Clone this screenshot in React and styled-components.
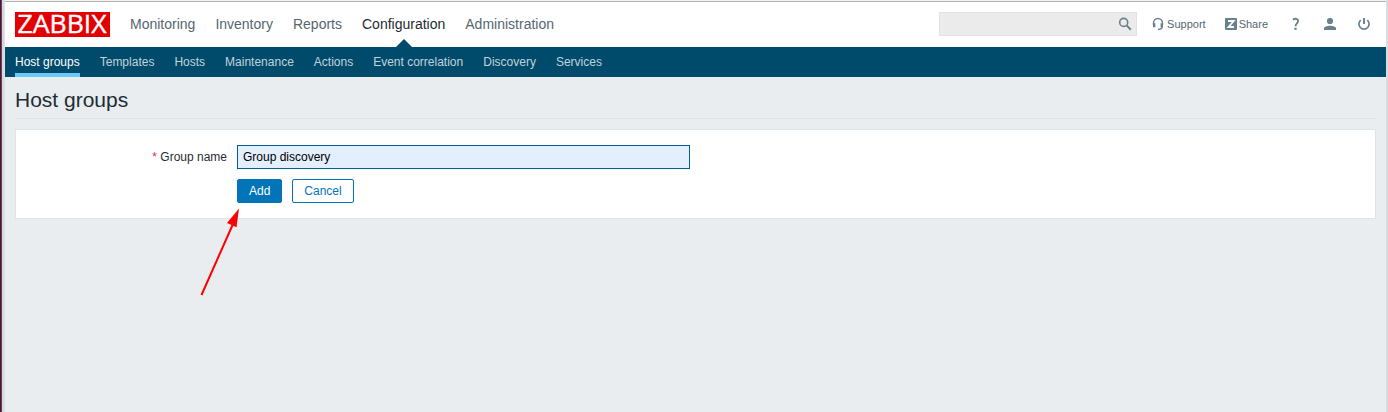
import React from 'react';
import styled, { createGlobalStyle } from 'styled-components';

const GlobalStyle = createGlobalStyle`
  *, *::before, *::after { box-sizing: border-box; }
  body {
    margin: 0;
    background: #e9edf0;
    color: #1f2c33;
    font-family: "Liberation Sans", Arial, sans-serif;
    font-size: 12px;
    line-height: 14px;
    overflow: hidden;
  }
`;

const Window = styled.div`
  display: grid;
  grid-template-columns: 5px minmax(0, 1fr) 2px;
  height: 412px;
`;

const LeftFrame = styled.div`
  background: linear-gradient(90deg, #5e0b3a 0 1px, #5b4a56 1px 2px, #d5d8dc 2px 4px, #dfe2e8 4px 5px);
`;

const RightFrame = styled.div`
  background: #d9dce1;
`;

const Page = styled.div`
  display: flex;
  flex-direction: column;
  background: #e9edf0;
`;

const TopBar = styled.header`
  display: flex;
  align-items: center;
  height: 47px;
  padding: 2px 10px 0;
  background: linear-gradient(#f4f4f4 0 1px, #b2b2b2 1px 2px, #fff 2px);
`;

const Logo = styled.svg`
  display: block;
  width: 95px;
  height: 25px;
  margin-right: 20px;
  background: #e30000;
  flex: none;
  overflow: visible;
`;

const LogoText = styled.text`
  fill: #fff;
  stroke: #fff;
  stroke-width: 0.4px;
  font: 25px "Open Sans", sans-serif;
`;

const MainMenu = styled.nav`
  display: flex;
  gap: 20px;
  height: 45px;
  font-size: 14px;
  line-height: 44px;
`;

const MainItem = styled.a`
  position: relative;
  color: ${(p) => (p.$active ? '#1f2c33' : '#56676f')};
  &::after {
    content: '';
    display: ${(p) => (p.$active ? 'block' : 'none')};
    position: absolute;
    bottom: 0;
    left: 50%;
    margin-left: -8px;
    border: 8px solid transparent;
    border-top: 0;
    border-bottom-color: #004b6b;
  }
`;

const Tools = styled.div`
  display: flex;
  align-items: center;
  height: 24px;
  margin-left: auto;
  margin-bottom: 1px;
  color: #56676f;
  font-size: 11px;
`;

const SearchBox = styled.div`
  display: flex;
  align-items: center;
  justify-content: flex-end;
  width: 198px;
  height: 24px;
  padding-right: 4px;
  margin-right: 15px;
  background: #ebebeb;
  border: 1px solid #e2e2e2;
`;

const ToolLink = styled.a`
  display: flex;
  align-items: center;
  gap: ${(p) => p.$gap}px;
  margin-right: ${(p) => p.$after}px;
`;

const Icon = styled.svg`
  display: block;
  flex: none;
  color: #69808d;
`;

const SubMenu = styled.nav`
  display: flex;
  gap: 20px;
  height: 30px;
  padding: 0 10px;
  background: #004b6b;
  line-height: 30px;
`;

const SubItem = styled.a`
  height: 30px;
  color: ${(p) => (p.$active ? '#fff' : '#c0d2da')};
  border-bottom: 4px solid ${(p) => (p.$active ? '#69c9f9' : 'transparent')};
`;

const Title = styled.h1`
  height: 42px;
  margin: 0 10px 10px;
  border-bottom: 1px solid #dfe4e7;
  font-size: 21px;
  font-weight: normal;
  line-height: 46px;
`;

const Form = styled.form`
  display: grid;
  grid-template-columns: 211px 453px;
  column-gap: 10px;
  row-gap: 10px;
  align-content: start;
  height: 90px;
  margin: 0 10px;
  padding-top: 15px;
  background: #fff;
  border: 1px solid #dfe4e7;
`;

const Label = styled.label`
  text-align: right;
  line-height: 24px;
  &::before {
    content: '* ';
    color: #f0283c;
  }
`;

const Input = styled.input`
  height: 24px;
  padding: 0 5px;
  color: #000;
  background: #e4effd;
  border: 1px solid #005f97;
  font: inherit;
  outline: 0;
`;

const Actions = styled.div`
  display: flex;
  grid-column: 2;
  gap: 10px;
`;

const Button = styled.button`
  height: 24px;
  padding: 0 11px;
  color: ${(p) => (p.$primary ? '#fff' : '#0275b8')};
  background: ${(p) => (p.$primary ? '#0275b8' : '#fff')};
  border: 1px solid #0275b8;
  border-radius: 2px;
  font: inherit;
`;

const Arrow = styled.svg`
  position: absolute;
  left: 195px;
  top: 204px;
`;

const sections = ['Monitoring', 'Inventory', 'Reports', 'Configuration', 'Administration'];
const pages = ['Host groups', 'Templates', 'Hosts', 'Maintenance', 'Actions', 'Event correlation', 'Discovery', 'Services'];

export default function App() {
  return (
    <>
      <GlobalStyle />
      <Window>
        <LeftFrame />
        <Page>
          <TopBar>
            <Logo viewBox="0 0 95 25">
              <LogoText x="2.6" y="21.3" textLength="89" lengthAdjust="spacingAndGlyphs">ZABBIX</LogoText>
            </Logo>
            <MainMenu>
              {sections.map((name) => (
                <MainItem key={name} $active={name === 'Configuration'}>{name}</MainItem>
              ))}
            </MainMenu>
            <Tools>
              <SearchBox>
                <Icon width="14" height="14" viewBox="0 0 14 14" fill="none" stroke="currentColor">
                  <circle cx="5.7" cy="5.4" r="4" strokeWidth="1.6" />
                  <path d="M8.6 8.4 12.8 12.7" strokeWidth="2" />
                </Icon>
              </SearchBox>
              <ToolLink $gap={3} $after={19}>
                <Icon width="12" height="14" viewBox="0 0 12 14" fill="none" stroke="currentColor">
                  <path d="M1.5 8V6a4.5 4.5 0 0 1 9 0v2" strokeWidth="1.4" />
                  <path d="M2.2 6.2v4M9.8 6.2v4" strokeWidth="2.4" />
                  <path d="M10.3 9.5c0 1.8-1 2.8-4.3 2.8" strokeWidth="1.5" />
                </Icon>
                Support
              </ToolLink>
              <ToolLink $gap={2} $after={24}>
                <Icon width="12" height="12" viewBox="0 0 12 12">
                  <rect width="12" height="12" rx="1" fill="currentColor" />
                  <path d="M3 3h5.7L3.5 9H9" fill="none" stroke="#fff" strokeWidth="1.8" />
                </Icon>
                Share
              </ToolLink>
              <ToolLink $after={24}>
                <Icon width="8" height="14" viewBox="0 0 8 14">
                  <path d="M0.900 2.600C3.400 1.100 6.300 1.800 6.100 4.200 6 6.300 3.500 6.500 3.500 9.200" fill="none" stroke="currentColor" strokeWidth="1.9" />
                  <rect x="2.400" y="10.700" width="2.200" height="2.200" fill="currentColor" />
                </Icon>
              </ToolLink>
              <ToolLink $after={22}>
                <Icon width="12" height="12" viewBox="0 0 12 12" fill="currentColor">
                  <circle cx="6" cy="3" r="3.1" />
                  <path d="M0 12v-1.500C0 8.700 3 7.800 6 7.800s6 .9 6 2.700V12z" />
                </Icon>
              </ToolLink>
              <ToolLink $after={6}>
                <Icon width="12" height="12" viewBox="0 0 12 12" fill="none" stroke="currentColor">
                  <path d="M6 0v6" strokeWidth="1.9" />
                  <path d="M2.700 2.100a5.100 5.100 0 1 0 6.600 0" strokeWidth="1.700" />
                </Icon>
              </ToolLink>
            </Tools>
          </TopBar>
          <SubMenu>
            {pages.map((name) => (
              <SubItem key={name} $active={name === 'Host groups'}>{name}</SubItem>
            ))}
          </SubMenu>
          <Title>Host groups</Title>
          <Form>
            <Label htmlFor="group-name">Group name</Label>
            <Input id="group-name" defaultValue="Group discovery" />
            <Actions>
              <Button type="button" $primary>Add</Button>
              <Button type="button">Cancel</Button>
            </Actions>
          </Form>
        </Page>
        <RightFrame />
      </Window>
      <Arrow width="50" height="96" viewBox="0 0 50 96">
        <path d="M6.500 91 38 20" stroke="#f00" strokeWidth="2" />
        <path d="M44 4.500 41.500 23.300 32 19z" fill="#f00" />
      </Arrow>
    </>
  );
}
